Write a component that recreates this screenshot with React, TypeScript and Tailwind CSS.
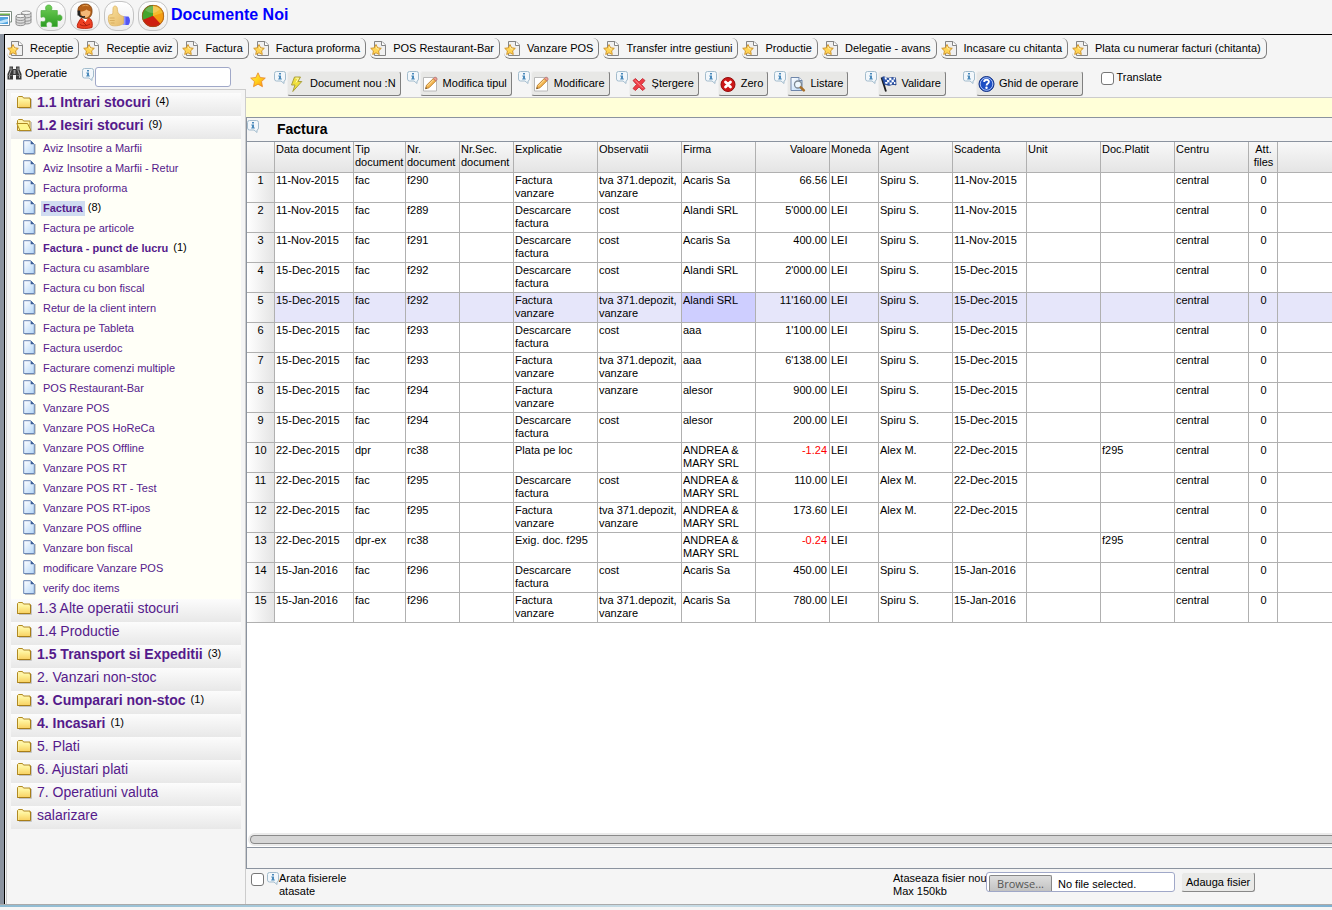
import React, { useState } from 'react';

type Count = number | null;

const favourites = [
  'Receptie',
  'Receptie aviz',
  'Factura',
  'Factura proforma',
  'POS Restaurant-Bar',
  'Vanzare POS',
  'Transfer intre gestiuni',
  'Productie',
  'Delegatie - avans',
  'Incasare cu chitanta',
  'Plata cu numerar facturi (chitanta)',
];

const documents: [string, Count][] = [
  ['Aviz Insotire a Marfii', null],
  ['Aviz Insotire a Marfii - Retur', null],
  ['Factura proforma', null],
  ['Factura', 8],
  ['Factura pe articole', null],
  ['Factura - punct de lucru', 1],
  ['Factura cu asamblare', null],
  ['Factura cu bon fiscal', null],
  ['Retur de la client intern', null],
  ['Factura pe Tableta', null],
  ['Factura userdoc', null],
  ['Facturare comenzi multiple', null],
  ['POS Restaurant-Bar', null],
  ['Vanzare POS', null],
  ['Vanzare POS HoReCa', null],
  ['Vanzare POS Offline', null],
  ['Vanzare POS RT', null],
  ['Vanzare POS RT - Test', null],
  ['Vanzare POS RT-ipos', null],
  ['Vanzare POS offline', null],
  ['Vanzare bon fiscal', null],
  ['modificare Vanzare POS', null],
  ['verify doc items', null],
];

const groups: { name: string; count: Count; children?: [string, Count][] }[] = [
  { name: '1.1 Intrari stocuri', count: 4 },
  { name: '1.2 Iesiri stocuri', count: 9, children: documents },
  { name: '1.3 Alte operatii stocuri', count: null },
  { name: '1.4 Productie', count: null },
  { name: '1.5 Transport si Expeditii', count: 3 },
  { name: '2. Vanzari non-stoc', count: null },
  { name: '3. Cumparari non-stoc', count: 1 },
  { name: '4. Incasari', count: 1 },
  { name: '5. Plati', count: null },
  { name: '6. Ajustari plati', count: null },
  { name: '7. Operatiuni valuta', count: null },
  { name: 'salarizare', count: null },
];

const columns: [string, string][] = [
  ['Data document', 'w-[79px]'],
  ['Tip document', 'w-[52px]'],
  ['Nr. document', 'w-[54px]'],
  ['Nr.Sec. document', 'w-[54px]'],
  ['Explicatie', 'w-[84px]'],
  ['Observatii', 'w-[84px]'],
  ['Firma', 'w-[74px]'],
  ['Valoare', 'w-[74px]'],
  ['Moneda', 'w-[49px]'],
  ['Agent', 'w-[74px]'],
  ['Scadenta', 'w-[74px]'],
  ['Unit', 'w-[74px]'],
  ['Doc.Platit', 'w-[74px]'],
  ['Centru', 'w-[74px]'],
  ['Att. files', 'w-[29px]'],
];

const VALUE_COL = 7;
const FILES_COL = 14;

const rows: string[][] = [
  ['11-Nov-2015', 'fac', 'f290', '', 'Factura vanzare', 'tva 371.depozit, vanzare', 'Acaris Sa', '66.56', 'LEI', 'Spiru S.', '11-Nov-2015', '', '', 'central', '0'],
  ['11-Nov-2015', 'fac', 'f289', '', 'Descarcare factura', 'cost', 'Alandi SRL', "5'000.00", 'LEI', 'Spiru S.', '11-Nov-2015', '', '', 'central', '0'],
  ['11-Nov-2015', 'fac', 'f291', '', 'Descarcare factura', 'cost', 'Acaris Sa', '400.00', 'LEI', 'Spiru S.', '11-Nov-2015', '', '', 'central', '0'],
  ['15-Dec-2015', 'fac', 'f292', '', 'Descarcare factura', 'cost', 'Alandi SRL', "2'000.00", 'LEI', 'Spiru S.', '15-Dec-2015', '', '', 'central', '0'],
  ['15-Dec-2015', 'fac', 'f292', '', 'Factura vanzare', 'tva 371.depozit, vanzare', 'Alandi SRL', "11'160.00", 'LEI', 'Spiru S.', '15-Dec-2015', '', '', 'central', '0'],
  ['15-Dec-2015', 'fac', 'f293', '', 'Descarcare factura', 'cost', 'aaa', "1'100.00", 'LEI', 'Spiru S.', '15-Dec-2015', '', '', 'central', '0'],
  ['15-Dec-2015', 'fac', 'f293', '', 'Factura vanzare', 'tva 371.depozit, vanzare', 'aaa', "6'138.00", 'LEI', 'Spiru S.', '15-Dec-2015', '', '', 'central', '0'],
  ['15-Dec-2015', 'fac', 'f294', '', 'Factura vanzare', 'vanzare', 'alesor', '900.00', 'LEI', 'Spiru S.', '15-Dec-2015', '', '', 'central', '0'],
  ['15-Dec-2015', 'fac', 'f294', '', 'Descarcare factura', 'cost', 'alesor', '200.00', 'LEI', 'Spiru S.', '15-Dec-2015', '', '', 'central', '0'],
  ['22-Dec-2015', 'dpr', 'rc38', '', 'Plata pe loc', '', 'ANDREA & MARY SRL', '-1.24', 'LEI', 'Alex M.', '22-Dec-2015', '', 'f295', 'central', '0'],
  ['22-Dec-2015', 'fac', 'f295', '', 'Descarcare factura', 'cost', 'ANDREA & MARY SRL', '110.00', 'LEI', 'Alex M.', '22-Dec-2015', '', '', 'central', '0'],
  ['22-Dec-2015', 'fac', 'f295', '', 'Factura vanzare', 'tva 371.depozit, vanzare', 'ANDREA & MARY SRL', '173.60', 'LEI', 'Alex M.', '22-Dec-2015', '', '', 'central', '0'],
  ['22-Dec-2015', 'dpr-ex', 'rc38', '', 'Exig. doc. f295', '', 'ANDREA & MARY SRL', '-0.24', 'LEI', '', '', '', 'f295', 'central', '0'],
  ['15-Jan-2016', 'fac', 'f296', '', 'Descarcare factura', 'cost', 'Acaris Sa', '450.00', 'LEI', 'Spiru S.', '15-Jan-2016', '', '', 'central', '0'],
  ['15-Jan-2016', 'fac', 'f296', '', 'Factura vanzare', 'tva 371.depozit, vanzare', 'Acaris Sa', '780.00', 'LEI', 'Spiru S.', '15-Jan-2016', '', '', 'central', '0'],
];

const STAR = 'M8 .8l2.2 4.7 5.1.6-3.8 3.5 1 5.1L8 12.2l-4.500 2.500 1-5.100L.7 6.100l5.100-.6z';

// Gradients shared by all the icons
function IconDefs() {
  return (
    <svg width="0" height="0" className="absolute" aria-hidden="true">
      <defs>
        <linearGradient id="gold" x1="0" y1="0" x2="0" y2="1">
          <stop offset="0" stopColor="#fff6a0" />
          <stop offset="1" stopColor="#f8d060" />
        </linearGradient>
        <linearGradient id="starFill" x1="0" y1="0" x2="1" y2="1">
          <stop offset="0" stopColor="#fff04a" />
          <stop offset=".5" stopColor="#ffd21e" />
          <stop offset="1" stopColor="#ff8a10" />
        </linearGradient>
        <linearGradient id="paper" x1="0" y1="0" x2="1" y2="1">
          <stop offset="0" stopColor="#ffffff" />
          <stop offset="1" stopColor="#b5d6f8" />
        </linearGradient>
        <linearGradient id="green" x1="0" y1="0" x2="0" y2="1">
          <stop offset="0" stopColor="#72cf58" />
          <stop offset="1" stopColor="#2c9c22" />
        </linearGradient>
        <linearGradient id="skin" x1="0" y1="0" x2="1" y2="1">
          <stop offset="0" stopColor="#fbe3a0" />
          <stop offset="1" stopColor="#e5b968" />
        </linearGradient>
      </defs>
    </svg>
  );
}

function InfoIcon() {
  return (
    <svg width="12" height="13" viewBox="0 0 12 13" className="shrink-0">
      <path d="M2.500 .5h7a2 2 0 0 1 2 2v5.500a2 2 0 0 1-1.500 2v2.500L7 10H2.500a2 2 0 0 1-2-2V2.500a2 2 0 0 1 2-2z" fill="#f2f7fb" stroke="#a3bccd" />
      <path d="M5 2h2v1.500H5zM4.300 4.500H7v3h.8v1H4.200v-1H5v-2h-.7z" fill="#4a8abb" />
    </svg>
  );
}

function FavIcon() {
  return (
    <svg width="17" height="17" viewBox="0 0 17 17" className="shrink-0">
      <path d="M4.500 1.500h7.500l3.500 3.500v10.500h-11z" fill="#f0f0f0" stroke="#858585" />
      <path d="M11.500 1.500v4h4" fill="#fff" stroke="#858585" />
      <path d="M6 4.500l1.600 3.300 3.700.5-2.700 2.600.7 3.600L6 12.800l-3.300 1.700.7-3.600L.7 8.300l3.700-.5z" fill="#ffd455" stroke="#cd9127" strokeWidth=".9" />
      <path d="M6 6.500l.9 2.200 2 .4" fill="none" stroke="#fff2b8" strokeWidth=".8" />
    </svg>
  );
}

function FolderIcon({ open }: { open?: boolean }) {
  return (
    <svg width="17" height="14" viewBox="0 0 17 14" className="shrink-0">
      <path d="M3 13.500h12.500V4" fill="none" stroke="#c4c4c4" />
      <path d="M1.500 12.500V2.500l1-1h4l1 1.500h6.500v9.500z" fill="#fff3a8" stroke="#b08a22" />
      {open ? (
        <path d="M.8 5.500h10.700l3.500 7H4z" fill="#fff68c" stroke="#b08a22" />
      ) : (
        <path d="M2.500 4.500h11.500v8H2.500z" fill="url(#gold)" />
      )}
      {!open && <path d="M1.500 12.500h13V3.500" fill="none" stroke="#a87e18" />}
    </svg>
  );
}

function PageIcon() {
  return (
    <svg width="13" height="15" viewBox="0 0 13 15" className="shrink-0">
      <path d="M2 14.200h10V4" fill="none" stroke="#a4a4a4" />
      <path d="M.7 .7h7l3.600 3.600v9.200H.7z" fill="url(#paper)" stroke="#6b87b5" />
      <path d="M7.700 .7v3.600h3.600z" fill="#3d5f98" />
    </svg>
  );
}

function BoltIcon() {
  return (
    <svg width="16" height="16" viewBox="0 0 16 16">
      <path d="M5.500 1h6l-2.500 4.500h3.800L3.800 15.500 6 9H2.500z" fill="#efdf3c" stroke="#aaa040" />
      <path d="M6.500 2.200h3L7 6.500" fill="none" stroke="#fff9b5" />
    </svg>
  );
}

function EditIcon() {
  return (
    <svg width="16" height="16" viewBox="0 0 16 16">
      <path d="M1.500 1.500h13v13.500h-13z" fill="#fff" stroke="#b8b8b8" />
      <path d="M3.500 12.800l1-3.500 6.800-6.800 2.500 2.500L7 11.800z" fill="#f3b44f" stroke="#b37422" strokeWidth=".8" />
      <path d="M11.300 2.500l1.200-1.200c1.500-.4 2.900.8 2.500 2.500L13.800 5z" fill="#ef9d92" stroke="#a8625a" strokeWidth=".6" />
      <path d="M3.500 12.800l.4-1.600 1.100 1.100z" fill="#333" />
      <path d="M5.500 9.800l6-6" stroke="#ffe6a8" />
    </svg>
  );
}

function DeleteIcon() {
  return (
    <svg width="16" height="16" viewBox="0 0 16 16">
      <path d="M2 4.500L4.500 2.500 8 6l3.500-3.500L14 4.500 10.500 8.500l3.500 4-2.500 2L8 11l-3.500 3.500-2.500-2 3.500-4z" fill="#ee3c45" stroke="#c3323c" strokeWidth=".9" />
      <path d="M4 4.300l8 8" stroke="#ff8b8f" />
    </svg>
  );
}

function ZeroIcon() {
  return (
    <svg width="16" height="16" viewBox="0 0 16 16">
      <circle cx="8" cy="8.500" r="7" fill="#cc1717" stroke="#920d0d" />
      <path d="M5.500 6l5 5m0-5l-5 5" stroke="#fff" strokeWidth="2.800" strokeLinecap="round" />
    </svg>
  );
}

function PreviewIcon() {
  return (
    <svg width="17" height="16" viewBox="0 0 17 16">
      <path d="M2 1.500h8l3 3v10H2z" fill="url(#paper)" stroke="#6f86aa" />
      <path d="M10 1.500v3h3" fill="#fff" stroke="#6f86aa" />
      <circle cx="9" cy="8.500" r="3.500" fill="#eef7fd" stroke="#7d8893" strokeWidth="1.300" />
      <path d="M11.800 11.300l3 3" stroke="#a8702a" strokeWidth="2.600" strokeLinecap="round" />
    </svg>
  );
}

function FlagIcon() {
  return (
    <svg width="17" height="17" viewBox="0 0 17 17">
      <path d="M1.500 2.500L6 16.500" stroke="#1c1c1c" strokeWidth="1.800" />
      <path d="M2 2.500c3-2 4 1.500 7.500.5 2.500-.8 4-.5 6-.2l.5 7.200c-2.500-1-4-.5-6 .2C7.500 11 6.500 8.500 4.500 10z" fill="#2c56ad" stroke="#1c3a80" strokeWidth=".8" />
      <path d="M4.500 2.200h2l.3 2.300H5zM9 3.200l2.300-.6.2 2.300-2.200.5zM6.800 4.700l2.400.5.3 2.300-2.300-.5zM11.500 5l2.200-.4.2 2.300-2.200.5zM5 7h2.300l.5 1.600-2.100.3zM9.600 7.600l2.200-.4.2 2-2.200.5zM13.900 7l1.500.1.1 2-1.500-.1zM13.500 2.600h1.600v2h-1.500z" fill="#fff" />
    </svg>
  );
}

function HelpIcon() {
  return (
    <svg width="17" height="17" viewBox="0 0 17 17">
      <circle cx="8.500" cy="9" r="7.500" fill="#1d4fc4" stroke="#123081" />
      <circle cx="8.500" cy="9" r="6.300" fill="none" stroke="#b8cbf5" strokeWidth=".9" />
      <path d="M6.200 7c0-3 4.700-3 4.700-.2 0 1.800-2.300 1.700-2.300 3.600" fill="none" stroke="#fff" strokeWidth="1.900" />
      <circle cx="8.500" cy="12.800" r="1.200" fill="#fff" />
    </svg>
  );
}

function BinocularsIcon() {
  return (
    <svg width="15" height="14" viewBox="0 0 15 14" className="shrink-0">
      <path d="M2.500 .5H6v2.500h3V.5h3.500v3L14.500 8v5.500H9V9H6v4.500H.5V8l2-4.500z" fill="#383838" />
      <path d="M6.500 4h2v4h-2z" fill="#999" />
      <path d="M4 1.500v3L2.500 8v4.500M11 1.500v3l1.500 4V12" fill="none" stroke="#a8a8a8" />
      <path d="M1 9.500h4.500M9.500 9.500H14M3 3h3M9 3h3" stroke="#777" strokeWidth=".8" />
    </svg>
  );
}

function PicturesIcon() {
  return (
    <svg width="13" height="16" viewBox="0 0 13 16" className="shrink-0">
      <path d="M-3 .5h14.500v10.500H-3z" fill="#fff" stroke="#7d8c80" />
      <path d="M-3 2.500h13v7H-3z" fill="#6fb04d" />
      <path d="M-3 4.500h12.500v10H-3z" fill="#fff" stroke="#7b8b98" />
      <path d="M-3 6h11v7H-3z" fill="#52a5e0" />
      <path d="M-3 10c4 1 7-2 11-2v2.500c-4 1.500-7 2.500-11 1.500z" fill="#bfe3fa" />
    </svg>
  );
}

function DatabaseIcon() {
  return (
    <svg width="17" height="17" viewBox="0 0 17 17" className="shrink-0">
      <g fill="#dcdcdc" stroke="#868686" strokeWidth=".9">
        <path d="M6.500 2.800v9.500c0 2.200 9.500 2.200 9.500 0V2.800z" />
        <path d="M6.500 9.500c0 2.200 9.500 2.200 9.500 0M6.500 6.200c0 2.200 9.500 2.200 9.500 0" fill="none" />
        <ellipse cx="11.200" cy="2.800" rx="4.800" ry="1.800" fill="#f5f5f5" />
        <path d="M1 6v8c0 2.200 9 2.200 9 0V6z" />
        <path d="M1 11.500c0 2.200 9 2.200 9 0M1 8.800c0 2.200 9 2.200 9 0" fill="none" />
        <ellipse cx="5.500" cy="6" rx="4.500" ry="1.700" fill="#f7f7f7" />
      </g>
    </svg>
  );
}

function PuzzleIcon() {
  return (
    <svg width="24" height="24" viewBox="0 0 24 24">
      <path d="M2 6.500h5.200C5.700 3.500 7 1 9.700 1s4 2.500 2.600 5.500h6v5c3-1.300 4.700 0 4.700 2.300s-1.700 3.700-4.700 2.300V22.500h-5.500c1.200-3.200-.6-4.700-2.600-4.700s-3.700 1.500-2.500 4.700H2v-5c3.200 1 4.500-.4 4.500-2.300S5.200 12 2 13.300z" fill="url(#green)" stroke="#46ac38" strokeWidth=".7" />
    </svg>
  );
}

function SupportIcon() {
  return (
    <svg width="20" height="26" viewBox="0 0 20 26">
      <path d="M2.500 24.500c-1-3 1-5 2.500-8 1.500-2 8.500-2.500 11 0 1.500 2.500 1.500 5 1 8-4 1.300-10.500 1.300-14.500 0z" fill="#ee4023" stroke="#b3220f" strokeWidth=".9" />
      <path d="M7 15h6l-2.500 4z" fill="#fff" />
      <path d="M5 21.500c3 1.800 6 1.800 10-.5M8 19l3 3" fill="none" stroke="#a81d0c" />
      <path d="M3 8C2.500 3.500 6 1 10.500 1s7 3.500 6.500 8c-.3 4-2.500 6.500-6 6.500S4 13 3 8z" fill="#b5611a" stroke="#7d3c08" strokeWidth=".8" />
      <path d="M5.500 8.500c2.500 0 4-.5 6-2 1.500 1 2.500 1.500 4 2-.2 3.500-2 6-4.700 6-2.800 0-5-2.500-5.300-6z" fill="#f4b878" />
      <path d="M2.500 7.500h2.700v5H2.500z" fill="#222" />
      <path d="M4 12c1 1.800 3 2.200 6 1.800" fill="none" stroke="#222" strokeWidth="1.600" />
      <path d="M7.500 3c2-.8 4-.8 6 0" fill="none" stroke="#df9848" />
    </svg>
  );
}

function ThumbIcon() {
  return (
    <svg width="24" height="22" viewBox="0 0 24 22">
      <path d="M16 11.500h5.500c2 2.500 2 6 0 8.500H16z" fill="#5256f4" />
      <path d="M15.500 11.500h3v8.500h-3z" fill="#9396fb" />
      <path d="M1.500 11.500C1.500 10 3 9.500 5.500 9.500c.8-2.500.2-5 .7-7 .8-2.200 3.600-1.800 4 .5.4 2.400.3 4.500 1.800 6 1.500 1.500 3 2 4.500 2.500v7c-3 2.500-10.500 3-13 1.500C1.500 18 1 14 1.500 11.500z" fill="url(#skin)" stroke="#dcb466" strokeWidth=".8" />
      <path d="M2.500 13h5M2.700 15.500h5M3.500 18h4" stroke="#cfa050" strokeWidth=".7" />
    </svg>
  );
}

function PieIcon() {
  return (
    <svg width="24" height="24" viewBox="0 0 24 24">
      <circle cx="12" cy="12" r="11" fill="#c92212" />
      <path d="M12 12V1A11 11 0 0 1 19.500 20z" fill="#f59c12" />
      <path d="M12 12V1A11 11 0 0 0 1.800 16z" fill="#44a52c" />
      <path d="M12 12V1A11 11 0 0 1 22.500 8.500z" fill="#f3bc2c" />
      <path d="M12 12L1.800 16A11 11 0 0 0 19.500 20z" fill="#cd1f10" />
      <path d="M4 6a10 10 0 0 1 15-1c-3 4-9 6-15 1z" fill="#fff" opacity=".2" />
      <circle cx="12" cy="12" r="10.700" fill="none" stroke="#96591a" strokeWidth=".7" />
    </svg>
  );
}

const actions = [
  { label: 'Document nou :N', icon: <BoltIcon />, margin: 'ml-2' },
  { label: 'Modifica tipul', icon: <EditIcon />, margin: 'ml-1.5' },
  { label: 'Modificare', icon: <EditIcon />, margin: 'ml-1.5' },
  { label: 'Ștergere', icon: <DeleteIcon />, margin: 'ml-1.5' },
  { label: 'Zero', icon: <ZeroIcon />, margin: 'ml-1.5' },
  { label: 'Listare', icon: <PreviewIcon />, margin: 'ml-1.5' },
  { label: 'Validare', icon: <FlagIcon />, margin: 'ml-[17px]' },
  { label: 'Ghid de operare', icon: <HelpIcon />, margin: 'ml-[17px]' },
];

const launchers = [
  { label: 'Module', icon: <PuzzleIcon /> },
  { label: 'Suport', icon: <SupportIcon /> },
  { label: 'Feedback', icon: <ThumbIcon /> },
  { label: 'Rapoarte', icon: <PieIcon /> },
];

const checkboxClass = 'appearance-none w-[13px] h-[13px] shrink-0 rounded-[3px] border border-[#777] bg-white checked:bg-[#5a8fd0]';

function Sidebar() {
  return (
    <aside className="w-[241px] shrink-0 flex flex-col">
      <div className="h-[29px] flex items-start pl-0.5 pt-1">
        <span className="pt-0.5"><BinocularsIcon /></span>
        <label htmlFor="operatie" className="w-[58px] pl-[3px] pt-[3px] leading-[13px]">Operatie</label>
        <span className="pt-1 pl-0.5"><InfoIcon /></span>
        <input id="operatie" type="text" className="ml-px mt-[3px] w-[136px] h-5 px-1 bg-white border border-[#a0a8c8] rounded-[3px] outline-none" />
      </div>

      <nav className="flex-1 ml-px border-t border-l border-r border-[#ccc] pt-[3px] px-1">
        {groups.map((group) => (
          <React.Fragment key={group.name}>
            <div className="h-[23px] flex items-start pl-[5px] bg-linear-to-b from-[#fcfcfc] to-[#e8e8e8]">
              <span className="pt-0.5"><FolderIcon open={!!group.children} /></span>
              <a href="#" className={`ml-1 text-[14px] leading-[19px] text-[#551a8b] ${group.count ? 'font-bold' : ''}`}>{group.name}</a>
              {group.count && <span className="ml-[5px] leading-[17px]">({group.count})</span>}
            </div>
            {group.children && (
              <ul className="bg-[#fffff7]">
                {group.children.map(([name, count]) => (
                  <li key={name} className="h-5 flex items-start pl-3">
                    <span className="pt-px"><PageIcon /></span>
                    <a
                      href="#"
                      className={`ml-[5px] mt-0.5 px-0.5 leading-[15px] text-[#551a8b] ${count ? 'font-bold' : ''} ${name === 'Factura' ? 'bg-[#d0dcf0]' : ''}`}
                    >
                      {name}
                    </a>
                    {count && <span className="ml-[3px] leading-[17px]">({count})</span>}
                  </li>
                ))}
              </ul>
            )}
          </React.Fragment>
        ))}
      </nav>
    </aside>
  );
}

function DocumentTable() {
  const [selected, setSelected] = useState(4);

  return (
    <table className="w-full table-fixed border-separate border-spacing-0 text-left leading-[13px]">
      <thead>
        <tr className="bg-linear-to-b from-[#f8f8f8] to-[#e4e4e4]">
          <th className="w-7 h-[31px] border-r border-b border-[#b0b0b0]"></th>
          {columns.map(([name, width], i) => (
            <th
              key={name}
              className={`${width} pt-px pl-px align-top font-normal border-r border-b border-[#b0b0b0] ${i === VALUE_COL ? 'text-right pr-0.5' : ''} ${i === FILES_COL ? 'text-center' : ''}`}
            >
              {name}
            </th>
          ))}
          <th className="border-b border-[#b0b0b0]"></th>
        </tr>
      </thead>
      <tbody>
        {rows.map((row, r) => (
          <tr key={r} onClick={() => setSelected(r)} className={r === selected ? 'bg-[#e6e6fa]' : 'bg-white'}>
            <th className="h-[30px] pt-px align-top text-center font-normal border-r border-b border-[#b0b0b0] bg-linear-to-r from-white to-[#e4e4e4]">
              {r + 1}
            </th>
            {row.map((cell, c) => (
              <td
                key={c}
                className={`pt-px pl-px align-top border-r border-b border-[#b0b0b0] ${c === VALUE_COL ? 'text-right pr-0.5' : c === FILES_COL ? 'text-center' : 'pr-1'} ${cell.startsWith('-') ? 'text-[#ff0000]' : ''} ${r === selected && c === 6 ? 'bg-[#ceceff]' : ''}`}
              >
                {cell}
              </td>
            ))}
            <td className="border-b border-[#b0b0b0]"></td>
          </tr>
        ))}
      </tbody>
    </table>
  );
}

function AttachmentBar() {
  const [fileName, setFileName] = useState('');

  return (
    <div className="h-[35px] flex items-start pl-[5px] pt-[3px]">
      <input id="arata" type="checkbox" className={`${checkboxClass} mt-px`} />
      <span className="ml-[3px]"><InfoIcon /></span>
      <label htmlFor="arata" className="w-[100px] leading-[13px]">Arata fisierele atasate</label>
      <div className="ml-[514px] flex items-start">
        <label htmlFor="fisier" className="w-[93px] whitespace-nowrap leading-[13px]">
          Ataseaza fisier nou<br />Max 150kb
        </label>
        <label htmlFor="fisier" className="w-[189px] h-5 flex items-end pl-0.5 bg-white border border-[#a0a8c8] rounded-[3px] overflow-hidden">
          <span className="w-[63px] h-4 text-center leading-4 font-['Open_Sans',sans-serif] text-[#555] bg-linear-to-b from-[#dedede] to-[#c2c2c2] border border-b-0 border-[#888] rounded-t-[2px]">
            Browse...
          </span>
          <span className="ml-1.5 leading-[14px]">{fileName || 'No file selected.'}</span>
        </label>
        <input
          id="fisier"
          type="file"
          className="sr-only"
          onChange={(e) => setFileName(e.target.files?.[0]?.name ?? '')}
        />
        <button className="ml-1.5 h-5 px-1 bg-[#e9e9e7] border border-t-[#f4f4f4] border-l-[#f4f4f4] border-r-[#888] border-b-[#888] rounded-[3px]">
          Adauga fisier
        </button>
      </div>
    </div>
  );
}

export default function App() {
  return (
    <div className="min-h-screen flex flex-col bg-[#f5f5f5] text-black text-[11px] font-['Liberation_Sans',Arial,sans-serif] overflow-hidden">
      <IconDefs />

      <header className="h-[34px] flex items-start">
        <span className="pt-[11px]"><PicturesIcon /></span>
        <span className="pt-[10px] ml-0.5"><DatabaseIcon /></span>
        <div className="flex gap-1 ml-1 pt-px">
          {launchers.map((item) => (
            <button
              key={item.label}
              aria-label={item.label}
              className="w-[30px] h-[30px] flex items-center justify-center rounded-[12px] border border-[#c4c4c4] bg-linear-to-b from-white to-[#ececec]"
            >
              {item.icon}
            </button>
          ))}
        </div>
        <h1 className="ml-[3px] pt-[5px] text-[16px] leading-5 font-bold text-[#0000ff]">Documente Noi</h1>
      </header>

      <div className="flex-1 flex">
        <div className="w-1 shrink-0 bg-[#8b939f]" />
        <div className="flex-1 min-w-0 flex flex-col border-t border-l border-black">

          {/* Favourite documents */}
          <div className="flex flex-wrap gap-1 pl-0.5 pt-[3px] pb-px">
            {favourites.map((name) => (
              <button
                key={name}
                className="h-[21px] flex items-center gap-1.5 pr-[5px] border-r border-b border-[#808080] rounded-md"
              >
                <FavIcon />
                {name}
              </button>
            ))}
          </div>

          <div className="flex-1 flex">
            <Sidebar />

            <main className="flex-1 min-w-0 flex flex-col">
              {/* Document actions */}
              <div className="h-[37px] flex items-start pl-1 pt-[11px]">
                <svg width="16" height="16" viewBox="0 0 16 16" className="shrink-0 mt-px">
                  <path d={STAR} fill="url(#starFill)" stroke="#e8862a" strokeWidth=".8" />
                </svg>
                {actions.map((action) => (
                  <div key={action.label} className={`flex items-start gap-px ${action.margin}`}>
                    <InfoIcon />
                    <button className="h-[25px] flex items-center pl-px pr-1 bg-[#e8e8e6] border border-t-[#efefef] border-l-[#efefef] border-r-[#808080] border-b-[#808080] rounded-[3px]">
                      <span className="w-[21px]">{action.icon}</span>
                      {action.label}
                    </button>
                  </div>
                ))}
                <label className="flex items-start gap-0.5 ml-[18px] leading-[13px]">
                  <input type="checkbox" className={`${checkboxClass} mt-px`} />
                  Translate
                </label>
              </div>

              <div className="h-5 bg-[#ffffd8] border-t border-[#ccc]" />

              <section className="flex-1 flex flex-col border-t border-l border-b border-[#8b939f]">
                <div className="h-6 flex items-start border-b border-[#8b939f]">
                  <span className="pt-0.5"><InfoIcon /></span>
                  <h2 className="ml-[18px] text-[14px] leading-[22px] font-bold">Factura</h2>
                </div>
                <div className="flex-1 bg-white">
                  <DocumentTable />
                </div>
                <div className="h-4 pl-[3px] pt-1 bg-white">
                  <div className="h-[9px] rounded-l-full border border-r-0 border-[#8a8a8a] bg-[#d6d6d6] ring-2 ring-[#ebebeb]" />
                </div>
                <div className="h-[21px] border-t border-[#8b939f]" />
              </section>

              <AttachmentBar />
            </main>
          </div>
        </div>
      </div>

      <footer className="h-[6px] border-b-[3px] border-[#f5f5f5] bg-linear-to-r from-[#8fbbd2] via-[#c9dde6] to-[#7fb0d0]">
        <div className="h-px bg-[#aaa]" />
      </footer>
    </div>
  );
}
